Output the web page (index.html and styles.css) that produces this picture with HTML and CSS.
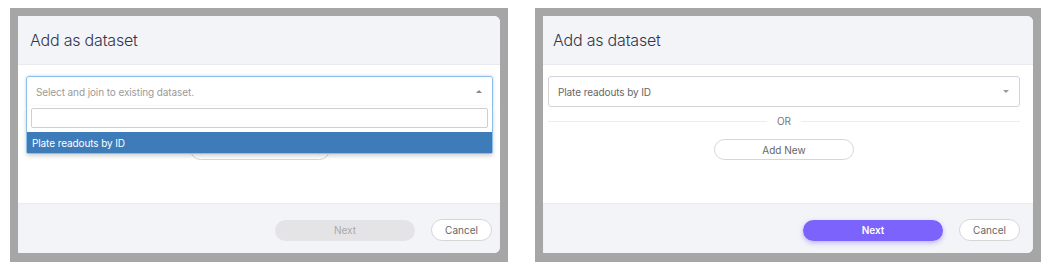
FILE: index.html
```html
<!DOCTYPE html>
<html lang="en">
<head>
  <meta charset="utf-8" />
  <title>Add as dataset</title>
  <link rel="stylesheet" href="styles.css">
</head>
<body>
  <div class="page">
    <!-- dropdown open state -->
    <div class="frame frame-left">
      <div class="modal">
        <div class="modal-header">
          <h2>Add as dataset</h2>
        </div>
        <div class="modal-body">
          <div class="select-wrap">
            <div class="select select-open">
              <span class="placeholder">Select and join to existing dataset.</span>
              <span class="caret caret-up"></span>
            </div>
            <div class="dropdown">
              <div class="search"><input type="text" class="search-input"></div>
              <div class="option option-active">Plate readouts by ID</div>
            </div>
          </div>
          <div class="divider"><span>OR</span></div>
          <div class="add-row">
            <button class="btn btn-outline btn-wide">Add New</button>
          </div>
        </div>
        <div class="modal-footer">
          <button class="btn btn-disabled btn-wide">Next</button>
          <button class="btn btn-outline btn-cancel">Cancel</button>
        </div>
      </div>
    </div>

    <!-- value selected -->
    <div class="frame frame-right">
      <div class="modal">
        <div class="modal-header">
          <h2>Add as dataset</h2>
        </div>
        <div class="modal-body">
          <div class="select-wrap">
            <div class="select">
              <span class="value">Plate readouts by ID</span>
              <span class="caret caret-down"></span>
            </div>
          </div>
          <div class="divider"><span>OR</span></div>
          <div class="add-row">
            <button class="btn btn-outline btn-wide">Add New</button>
          </div>
        </div>
        <div class="modal-footer">
          <button class="btn btn-primary btn-wide">Next</button>
          <button class="btn btn-outline btn-cancel">Cancel</button>
        </div>
      </div>
    </div>
  </div>
</body>
</html>
```

FILE: styles.css
```css
body {
  margin: 0;
  background-color: #fff;
  font-family: 'Inter', 'Liberation Sans', sans-serif;
  color: #333;
}

.page {
  display: flex;
  gap: 27px;
  padding: 8px 0 0 10px;
}

.frame {
  background-color: #a6a6a6;
  padding: 8px 8px 9px 8px;
}

.frame-left {
  width: 482px;
}

.frame-right {
  width: 490px;
}

.modal {
  background-color: #fff;
  border-radius: 0 6px 6px 0;
  overflow: hidden;
  display: flex;
  flex-direction: column;
  height: 237px;
}

.modal-header {
  background-color: #f3f4f8;
  height: 48px;
  border-bottom: 1px solid #e9eaef;
  display: flex;
  align-items: center;
}

.modal-header h2 {
  margin: 0;
  font-size: 16px;
  font-weight: 300;
  color: #34344f;
  letter-spacing: -0.2px;
}

.frame-left .modal-header h2 {
  padding-left: 12px;
}

.frame-right .modal-header h2 {
  padding-left: 10px;
}

.modal-body {
  flex: 1;
  padding-top: 11px;
}

.frame-left .modal-body {
  padding-left: 8px;
  padding-right: 7px;
}

.frame-right .modal-body {
  padding-left: 5px;
  padding-right: 13px;
}

.select-wrap {
  position: relative;
}

.select {
  height: 29px;
  border: 1px solid #d4d4d8;
  border-radius: 3px;
  display: flex;
  align-items: center;
  justify-content: space-between;
  padding: 0 10px 0 9px;
  font-size: 10px;
  letter-spacing: -0.1px;
}

.select-open {
  border-color: #8fbde9;
  border-radius: 3px 3px 0 0;
  box-shadow: 0 0 3px rgba(90, 150, 220, 0.45);
}

.placeholder {
  color: #9a9a9a;
}

.value {
  color: #666;
}

.caret {
  width: 0;
  height: 0;
  border-left: 3px solid transparent;
  border-right: 3px solid transparent;
}

.caret-up {
  border-bottom: 3px solid #888;
}

.caret-down {
  border-top: 3px solid #999;
}

.dropdown {
  position: absolute;
  left: 0;
  right: 0;
  top: 30px;
  background-color: #fff;
  border: 1px solid #8fbde9;
  border-top: none;
  border-radius: 0 0 3px 3px;
  box-shadow: 0 2px 4px rgba(0, 0, 0, 0.18);
  z-index: 2;
}

.search {
  padding: 2px 4px 4px 4px;
}

.search-input {
  display: block;
  box-sizing: border-box;
  width: 100%;
  height: 20px;
  border: 1px solid #cfcfcf;
  border-radius: 2px;
  margin: 0;
}

.option {
  height: 21px;
  display: flex;
  align-items: center;
  padding-left: 5px;
  font-size: 10px;
  letter-spacing: -0.1px;
}

.option-active {
  background-color: #3e7bb9;
  color: #fff;
}

.divider {
  display: flex;
  align-items: center;
  gap: 10px;
  margin-top: 8px;
  font-size: 10px;
  color: #777;
}

.divider::before,
.divider::after {
  content: "";
  flex: 1;
  border-top: 1px solid #ececec;
}

.add-row {
  display: flex;
  justify-content: center;
  margin-top: 12px;
}

.btn {
  font-family: inherit;
  font-size: 10px;
  height: 21px;
  border-radius: 11px;
  padding: 0;
  cursor: pointer;
}

.btn-wide {
  width: 140px;
}

.btn-outline {
  background-color: #fff;
  border: 1px solid #d6d6d6;
  color: #666;
}

.btn-cancel {
  width: 61px;
  height: 22px;
}

.btn-disabled {
  background-color: #e4e4e7;
  border: none;
  color: #a9a9a9;
}

.btn-primary {
  background-color: #7b63fc;
  border: none;
  color: #fff;
  font-weight: 600;
  box-shadow: 0 2px 5px rgba(123, 99, 252, 0.45);
}

.modal-footer {
  background-color: #f3f4f8;
  height: 50px;
  box-shadow: inset 0 1px 2px rgba(0, 0, 0, 0.04);
  display: flex;
  justify-content: flex-end;
  align-items: center;
  gap: 16px;
  padding-top: 4px;
  box-sizing: border-box;
}

.frame-left .modal-footer {
  padding-right: 8px;
}

.frame-right .modal-footer {
  padding-right: 13px;
}
```
